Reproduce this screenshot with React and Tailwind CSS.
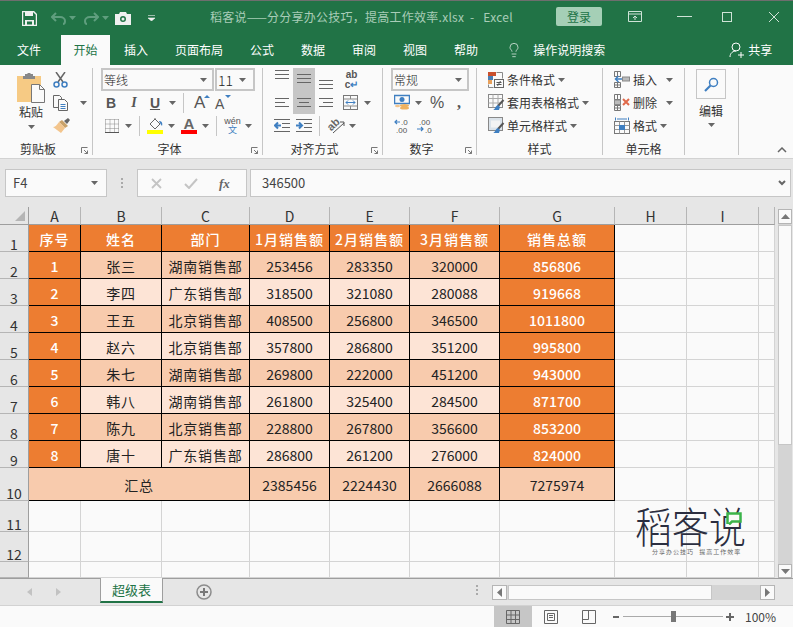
import { Lightbulb } from 'lucide-react';

const data = [
  [1, '张三', '湖南销售部', 253456, 283350, 320000, 856806],
  [2, '李四', '广东销售部', 318500, 321080, 280088, 919668],
  [3, '王五', '北京销售部', 408500, 256800, 346500, 1011800],
  [4, '赵六', '北京销售部', 357800, 286800, 351200, 995800],
  [5, '朱七', '湖南销售部', 269800, 222000, 451200, 943000],
  [6, '韩八', '湖南销售部', 261800, 325400, 284500, 871700],
  [7, '陈九', '北京销售部', 228800, 267800, 356600, 853200],
  [8, '唐十', '广东销售部', 286800, 261200, 276000, 824000],
];

const tabs = ['插入', '页面布局', '公式', '数据', '审阅', '视图', '帮助'];

function Caret({ className = '', fill = '#666' }) {
  return (
    <svg width="7" height="4" viewBox="0 0 7 4" className={`shrink-0 ${className}`}>
      <path d="M0 0h7L3.500 4z" fill={fill} />
    </svg>
  );
}

function Row({ children, className = '' }) {
  return <div className={`flex h-[23px] items-center ${className}`}>{children}</div>;
}

function VSep({ className = '' }) {
  return <div className={`h-[20px] w-px shrink-0 bg-[#c6c6c6] ${className}`} />;
}

function Group({ w, label, launcher, children }) {
  return (
    <div className={`relative mt-[3px] flex h-[87px] shrink-0 flex-col border-r border-[#c6c6c6] ${w}`}>
      <div className="flex-1">{children}</div>
      <div className={`h-[14px] text-center text-[12px] leading-[16px] text-[#333] ${launcher ? 'pr-4' : ''}`}>{label}</div>
      {launcher && (
        <svg width="7" height="7" viewBox="0 0 7 7" className="absolute bottom-px right-[4px]">
          <path d="M.5 6V.5H6.500M3 3l3.500 3.500M6.500 3.500v3h-3" fill="none" stroke="#777" />
        </svg>
      )}
    </div>
  );
}

function Lines({ widths, className = '', color = '#666' }) {
  return (
    <svg width="16" height="9" viewBox="0 0 16 9" className={`shrink-0 ${className}`}>
      {widths.map((l, i) => (
        <path key={i} d={`M${l[0]} ${i * 4 + 0.5}H${l[1]}`} stroke={color} />
      ))}
    </svg>
  );
}

function Combo({ text, w, size = 'text-[12px]', caretClass = '' }) {
  return (
    <div className={`flex h-[23px] items-center border-2 border-[#c6c6c6] bg-[#fafafa] pl-[1px] pr-[5px] ${w}`}>
      <span className={`flex-1 font-light leading-none text-[#222] ${size}`}>{text}</span>
      <Caret className={caretClass} />
    </div>
  );
}

function CondIcon() {
  return (
    <svg width="16" height="16" viewBox="0 0 16 16" className="shrink-0">
      <path d="M0 0h8v4H0z" fill="#c9502e" />
      <path d="M0 4h5v4H0z" fill="#4a7fb5" />
      <path d="M0 8h4v4H0z" fill="#e8a05a" />
      <path d="M8.500.5h6v6M.5 12.500v3h5" fill="none" stroke="#888" />
      <rect x="6.500" y="7.500" width="9" height="8" fill="#fafafa" stroke="#666" />
      <path d="M8.500 10.500h5M8.500 12.500h5M12.500 9l-3 5" stroke="#555" fill="none" />
    </svg>
  );
}

function TableStyleIcon({ plain }) {
  return (
    <svg width="17" height="17" viewBox="0 0 17 17" className="shrink-0">
      <rect x=".5" y=".5" width="14" height="13" fill={plain ? '#dbe3ea' : '#fafafa'} stroke="#888" />
      {!plain && <path d="M.5 4.500h14M.5 9h14M5 .5v13M10 .5v13" stroke="#aaa" fill="none" />}
      {plain && <path d="M3 3.500h9v7H3z" fill="#f3f3f3" />}
      <path d="M15.500 6L10 12" stroke="#555" strokeWidth="2" />
      <path d="M10 11l2 2-1 3H5c2 0 2-4 5-5z" fill="#3f7fc1" />
    </svg>
  );
}

function CellsIcon({ kind }) {
  if (kind === 'format') {
    return (
      <svg width="16" height="17" viewBox="0 0 16 17" className="shrink-0">
        <path d="M1.500 .5v3M14.500 .5v3M3 2h10" stroke="#3f7fc1" fill="none" />
        <rect x=".5" y="4.500" width="15" height="12" fill="#fafafa" stroke="#777" />
        <path d="M.5 8.500h15M.5 12.500h15M5.500 4.500v12M10.500 4.500v12" stroke="#999" fill="none" />
        <rect x="5" y="8" width="6" height="5" fill="#3f7fc1" />
      </svg>
    );
  }
  return (
    <svg width="16" height="17" viewBox="0 0 16 17" className="shrink-0">
      <path d="M.5.5h6v5h-6zM.5 5.500h6M3.500.5v5M.5 11.500h6v5h-6zM3.500 11.500v5M.5 14h6" fill="none" stroke="#777" />
      {kind === 'insert' ? (
        <>
          <rect x="8.500" y="6" width="7" height="4" fill="#bbb" stroke="#888" />
          <path d="M8 8H2M4.500 5L1.500 8l3 3" fill="none" stroke="#3f7fc1" strokeWidth="1.500" />
        </>
      ) : (
        <>
          <rect x=".5" y="6" width="6" height="4.500" fill="#bbb" stroke="#888" />
          <path d="M9 5l6 6M15 5l-6 6" stroke="#e0694a" strokeWidth="2" />
        </>
      )}
    </svg>
  );
}

function Ribbon() {
  return (
    <div className="flex h-[94px] border-b border-[#d2d2d2] bg-[#fafafa]">
      <Group w="w-[93px]" label="剪贴板" launcher>
        <div className="flex">
          <div className="ml-[17px] flex w-[28px] flex-col items-center">
            <svg width="28" height="30" viewBox="0 0 28 30" className="mt-[5px]">
              <path d="M0 3h24v26H0z" fill="#f6ca84" />
              <path d="M8 3V1h2.500V0h3v1H16v2h2v3H6V3z" fill="#888" />
              <path d="M14.500 11.500h8l5 5v13h-13z" fill="#fafafa" stroke="#777" />
              <path d="M22.500 11.500v5h5" fill="none" stroke="#777" />
            </svg>
            <div className="mt-px h-4 text-[12px] leading-4 text-[#333]">粘贴</div>
            <Caret className="mt-[5px]" />
          </div>
          <div className="ml-[8px] flex flex-col">
            <Row>
              <svg width="15" height="16" viewBox="0 0 15 16">
                <path d="M3 0l7 10M12 0L5 10" stroke="#666" strokeWidth="1.500" />
                <circle cx="3.500" cy="12.500" r="2.500" fill="none" stroke="#3f7fc1" strokeWidth="1.500" />
                <circle cx="11.500" cy="12.500" r="2.500" fill="none" stroke="#3f7fc1" strokeWidth="1.500" />
              </svg>
            </Row>
            <Row>
              <svg width="16" height="16" viewBox="0 0 16 16">
                <path d="M.5 .5h6l2 2v10h-8z" fill="#fafafa" stroke="#666" />
                <path d="M5.500 4.500h6l3 3v8h-9z" fill="#fafafa" stroke="#666" />
                <path d="M7.500 9.500h5M7.500 11.500h5M7.500 13.500h5" stroke="#3f7fc1" />
              </svg>
              <Caret className="ml-[11px]" />
            </Row>
            <Row>
              <svg width="17" height="15" viewBox="0 0 17 15">
                <path d="M11 3l4-3 2 2-3 4z" fill="#666" />
                <path d="M9 2l6 6-3 2-6-6z" fill="#c9a26a" />
                <path d="M6 4l6 6-4 5-8-6c2 0 4-2 6-5z" fill="#f3c58d" />
              </svg>
            </Row>
          </div>
        </div>
      </Group>

      <Group w="w-[170px]" label="字体" launcher>
        <Row className="pl-2">
          <Combo text="等线" w="w-[113px]" />
          <Combo text="11" w="ml-px w-[40px]" size="text-[14px]" caretClass="mr-[2px]" />
        </Row>
        <Row className="font-['Liberation_Sans','Noto_Sans_CJK_SC',sans-serif] text-[#555]">
          <span className="ml-[12px] w-[12px] text-center text-[14px] font-bold leading-none">B</span>
          <span className="ml-[13px] w-[8px] text-center font-['Liberation_Serif',serif] text-[14px] font-bold italic leading-none">I</span>
          <span className="ml-[11px] w-[12px] text-center text-[14px] font-bold leading-none underline">U</span>
          <Caret className="ml-[8px]" />
          <VSep className="ml-[7px]" />
          <span className="relative ml-[10px] w-[14px] text-[17px] leading-none">
            A
            <svg width="6" height="3" viewBox="0 0 6 3" className="absolute right-[-2px] top-[1px]"><path d="M0 3h6L3 0z" fill="#3f7fc1" /></svg>
          </span>
          <span className="relative ml-[7px] w-[14px] pt-[2px] text-[14px] leading-none">
            A
            <svg width="6" height="3" viewBox="0 0 6 3" className="absolute right-[-2px] top-0"><path d="M0 0h6L3 3z" fill="#3f7fc1" /></svg>
          </span>
        </Row>
        <Row className="font-['Liberation_Sans','Noto_Sans_CJK_SC',sans-serif]">
          <svg width="14" height="14" viewBox="0 0 14 14" className="ml-[12px] shrink-0">
            <path d="M.5 .5h13M.5 5h13M.5 9.500h13M.5 .5v13M5 .5v13M9.500 .5v13M13.500 .5v13" stroke="#888" strokeDasharray="1 1" fill="none" />
            <path d="M0 13.500h14" stroke="#555" />
          </svg>
          <Caret className="ml-[6px]" />
          <VSep className="ml-[7px]" />
          <div className="ml-[7px] flex w-[16px] shrink-0 flex-col items-center">
            <svg width="16" height="12" viewBox="0 0 16 12">
              <path d="M3 6l5-5 5 5-5 5z" fill="#fafafa" stroke="#666" />
              <path d="M8 1V0" stroke="#666" />
              <path d="M12 3c2 0 4 1 3 5-1-1-2-3-3-5z" fill="#3f7fc1" />
            </svg>
            <div className="h-[4px] w-[16px] bg-[#ffff00]" />
          </div>
          <Caret className="ml-[5px]" />
          <div className="ml-[6px] flex w-[16px] shrink-0 flex-col items-center">
            <span className="h-[12px] text-[15px] font-bold leading-[12px] text-[#666]">A</span>
            <div className="h-[4px] w-[16px] bg-[#ff0000]" />
          </div>
          <Caret className="ml-[5px]" />
          <VSep className="ml-[7px]" />
          <div className="ml-[8px] flex w-[15px] shrink-0 flex-col items-center leading-none">
            <span className="text-[9px] leading-[9px] text-[#555]">wén</span>
            <span className="text-[9px] leading-[9px] text-[#3f7fc1]">文</span>
          </div>
          <Caret className="ml-[5px]" />
        </Row>
      </Group>

      <Group w="w-[120px]" label="对齐方式" launcher>
        <Row>
          <div className="ml-[8px] flex h-[23px] w-[22px] justify-center pt-[2px]">
            <Lines widths={[[1, 15], [1, 15], [1, 15]]} />
          </div>
          <div className="flex h-[23px] w-[22px] justify-center bg-[#c6c6c6] pt-[6px]">
            <Lines widths={[[1, 15], [1, 15], [1, 15]]} />
          </div>
          <div className="flex h-[23px] w-[22px] justify-center pt-[12px]">
            <Lines widths={[[1, 15], [1, 15], [1, 15]]} />
          </div>
          <div className="ml-[8px] flex w-[13px] flex-col items-center font-['Liberation_Sans',sans-serif] text-[#555]">
            <span className="text-[10px] font-bold leading-[10px]">ab</span>
            <span className="text-[10px] font-bold leading-[10px]">c<span className="text-[#3f7fc1]">↵</span></span>
          </div>
        </Row>
        <Row>
          <div className="ml-[8px] flex h-[23px] w-[22px] items-center justify-center">
            <Lines widths={[[1, 15], [1, 11], [1, 15]]} />
          </div>
          <div className="flex h-[23px] w-[22px] items-center justify-center bg-[#c6c6c6]">
            <Lines widths={[[1, 15], [3, 13], [1, 15]]} />
          </div>
          <div className="flex h-[23px] w-[22px] items-center justify-center">
            <Lines widths={[[1, 15], [5, 15], [1, 15]]} />
          </div>
          <svg width="15" height="15" viewBox="0 0 15 15" className="ml-[6px] shrink-0">
            <rect x=".5" y=".5" width="14" height="14" fill="#fafafa" stroke="#777" />
            <path d="M.5 4h14M.5 11h14M7.500 .5V4M7.500 11v3.500" stroke="#888" />
            <path d="M3 7.500h9M5 5.500l-2 2 2 2M10 5.500l2 2-2 2" stroke="#3f7fc1" fill="none" />
          </svg>
          <Caret className="ml-[6px]" />
        </Row>
        <Row>
          <svg width="16" height="13" viewBox="0 0 16 13" className="ml-[11px] shrink-0">
            <path d="M0 .5h16M8 4.500h8M8 8.500h8M0 12.500h16" stroke="#666" />
            <path d="M7 6.500H1M4 3.500l-3 3 3 3" stroke="#3f7fc1" strokeWidth="2" fill="none" />
          </svg>
          <svg width="17" height="13" viewBox="0 0 17 13" className="ml-[5px] shrink-0">
            <path d="M1 .5h16M9 4.500h8M9 8.500h8M1 12.500h16" stroke="#666" />
            <path d="M1 6.500h6M4 3.500l3 3-3 3" stroke="#3f7fc1" strokeWidth="2" fill="none" />
          </svg>
          <VSep className="ml-[7px]" />
          <div className="relative ml-[7px] h-[16px] w-[18px]">
            <span className="absolute left-0 top-[1px] -rotate-45 font-['Liberation_Sans',sans-serif] text-[11px] font-bold leading-none text-[#666]">ab</span>
            <svg width="18" height="16" viewBox="0 0 18 16" className="absolute left-0 top-0">
              <path d="M6 15L17 5M13 4h4v4" stroke="#555" fill="none" />
            </svg>
          </div>
          <Caret className="ml-[4px]" />
        </Row>
      </Group>

      <Group w="w-[94px]" label="数字" launcher>
        <Row><Combo text="常规" w="ml-[8px] w-[78px]" /></Row>
        <Row>
          <svg width="16" height="17" viewBox="0 0 16 17" className="ml-[11px] shrink-0">
            <rect x=".5" y="1.500" width="15" height="8" fill="#fafafa" stroke="#3f7fc1" strokeWidth="1.500" />
            <circle cx="8" cy="5.500" r="2.500" fill="#3f7fc1" />
            <ellipse cx="10.500" cy="11.500" rx="4.500" ry="1.500" fill="#efb25f" />
            <ellipse cx="10.500" cy="14" rx="4.500" ry="1.500" fill="#efb25f" />
            <ellipse cx="3.500" cy="12" rx="2.500" ry="1.200" fill="#f3c58d" />
          </svg>
          <Caret className="ml-[5px]" />
          <span className="ml-[8px] w-[14px] font-['Liberation_Sans',sans-serif] text-[16px] leading-none text-[#555]">%</span>
          <span className="ml-[13px] font-['Liberation_Serif',serif] text-[16px] font-bold leading-none text-[#555]">,</span>
        </Row>
        <Row>
          <svg width="14" height="15" viewBox="0 0 14 15" className="ml-[11px] shrink-0 font-['Liberation_Sans',sans-serif]">
            <path d="M6 4H1M3 2L1 4l2 2" stroke="#3f7fc1" strokeWidth="1.200" fill="none" />
            <text x="7" y="7" fontSize="8" fill="#555">.0</text>
            <text x="2" y="14.500" fontSize="8" fill="#555">.00</text>
          </svg>
          <svg width="16" height="15" viewBox="0 0 16 15" className="ml-[8px] shrink-0 font-['Liberation_Sans',sans-serif]">
            <text x="3" y="7" fontSize="8" fill="#555">.00</text>
            <path d="M1 11h6M5 9l2 2-2 2" stroke="#3f7fc1" strokeWidth="1.200" fill="none" />
            <text x="9" y="14.500" fontSize="8" fill="#555">.0</text>
          </svg>
        </Row>
      </Group>

      <Group w="w-[126px]" label="样式">
        <Row className="text-[12px] text-[#333]">
          <div className="ml-[11px]"><CondIcon /></div>
          <span className="ml-[3px]">条件格式</span>
          <Caret className="ml-[3px]" />
        </Row>
        <Row className="text-[12px] text-[#333]">
          <div className="ml-[11px] w-[16px]"><TableStyleIcon /></div>
          <span className="ml-[3px]">套用表格格式</span>
          <Caret className="ml-[3px]" />
        </Row>
        <Row className="text-[12px] text-[#333]">
          <div className="ml-[11px] w-[16px]"><TableStyleIcon plain /></div>
          <span className="ml-[3px]">单元格样式</span>
          <Caret className="ml-[3px]" />
        </Row>
      </Group>

      <Group w="w-[82px]" label="单元格">
        <Row className="text-[12px] text-[#333]">
          <div className="ml-[11px]"><CellsIcon kind="insert" /></div>
          <span className="ml-[3px]">插入</span>
          <Caret className="ml-[9px]" />
        </Row>
        <Row className="text-[12px] text-[#333]">
          <div className="ml-[11px]"><CellsIcon kind="delete" /></div>
          <span className="ml-[3px]">删除</span>
          <Caret className="ml-[9px]" />
        </Row>
        <Row className="text-[12px] text-[#333]">
          <div className="ml-[11px]"><CellsIcon kind="format" /></div>
          <span className="ml-[3px]">格式</span>
          <Caret className="ml-[3px]" />
        </Row>
      </Group>

      <Group w="w-[54px]" label="">
        <div className="ml-[11px] flex w-[30px] flex-col items-center">
          <div className="mt-px flex h-[30px] w-[30px] items-center justify-center border border-[#c6c6c6]">
            <svg width="15" height="15" viewBox="0 0 15 15">
              <circle cx="9.500" cy="5.500" r="4" fill="none" stroke="#3f7fc1" strokeWidth="1.500" />
              <path d="M6.500 8.500L1 14" stroke="#3f7fc1" strokeWidth="2.200" />
            </svg>
          </div>
          <div className="mt-[4px] h-4 whitespace-nowrap text-[12px] leading-4 text-[#333]">编辑</div>
          <Caret className="mt-[4px]" />
        </div>
      </Group>

      <div className="flex flex-1 items-end justify-end pb-[5px] pr-[6px]">
        <svg width="10" height="6" viewBox="0 0 10 6">
          <path d="M1 5l4-4 4 4" fill="none" stroke="#666" strokeWidth="1.500" />
        </svg>
      </div>
    </div>
  );
}

function FormulaBar() {
  return (
    <div className="mt-[10px] flex h-[28px] items-stretch pl-[5px] pr-[2px] text-[13px]">
      <div className="flex w-[102px] items-center border border-[#c6c6c6] bg-[#fafafa] pl-[7px] pr-[8px] text-[#444]">
        <span className="flex-1">F4</span>
        <Caret />
      </div>
      <div className="flex w-[30px] flex-col items-center justify-center gap-[2px]">
        <div className="h-[2px] w-[2px] bg-[#aaa]" />
        <div className="h-[2px] w-[2px] bg-[#aaa]" />
        <div className="h-[2px] w-[2px] bg-[#aaa]" />
      </div>
      <div className="flex w-[110px] items-center border border-[#c6c6c6] bg-[#fafafa]">
        <svg width="11" height="11" viewBox="0 0 11 11" className="ml-[13px]">
          <path d="M1 1l9 9M10 1l-9 9" stroke="#c4c4c4" strokeWidth="1.800" />
        </svg>
        <svg width="14" height="11" viewBox="0 0 14 11" className="ml-[22px]">
          <path d="M1 6l4 4 8-9" stroke="#c4c4c4" strokeWidth="2" fill="none" />
        </svg>
        <span className="ml-[21px] font-['Liberation_Serif',serif] text-[13px] font-bold italic leading-none text-[#666]">fx</span>
      </div>
      <div className="ml-[3px] flex flex-1 items-center border border-[#c6c6c6] bg-[#fafafa] pl-[11px] pr-[4px] text-[#444]">
        <span className="flex-1">346500</span>
        <svg width="8" height="6" viewBox="0 0 8 6">
          <path d="M1 1l3 3 3-3" fill="none" stroke="#666" strokeWidth="2" />
        </svg>
      </div>
    </div>
  );
}

function Cell({ children, className = '' }) {
  return (
    <div className={`flex items-center justify-center overflow-hidden whitespace-nowrap border-b border-r pt-[2px] text-[14px] leading-none ${className}`}>
      {children}
    </div>
  );
}

function RowHead({ n, clip }) {
  return (
    <div className={`flex justify-center border-b border-r border-b-[#b5b5b5] border-r-[#9e9e9e] bg-[#e6e6e6] text-[14px] leading-none text-[#333] ${clip ? 'items-start overflow-hidden pt-[13px]' : 'items-end'}`}>
      {n}
    </div>
  );
}

function Blank() {
  return <div className="border-b border-r border-[#d4d4d4] bg-[#fafafa]" />;
}

function Sheet() {
  const colHeads = ['A', 'B', 'C', 'D', 'E', 'F', 'G', 'H', 'I', ''];
  return (
    <div className="relative mt-[10px] flex h-[371px] overflow-hidden">
      <div className="grid h-[371px] w-[775px] shrink-0 grid-cols-[29px_52px_81px_88px_80px_80px_90px_115px_72px_72px_16px] grid-rows-[18px_repeat(9,27px)_33px_31px_30px_16px]">
        <div className="flex items-end justify-end border-b border-r border-[#9e9e9e] bg-[#e6e6e6] pb-[3px] pr-[3px]">
          <svg width="10" height="10" viewBox="0 0 10 10"><path d="M10 0v10H0z" fill="#b5b5b5" /></svg>
        </div>
        {colHeads.map((c, i) => (
          <div key={i} className="flex items-end justify-center border-b border-r border-b-[#9e9e9e] border-r-[#b5b5b5] bg-[#e6e6e6] text-[14px] leading-[15px] text-[#333]">{c}</div>
        ))}

        <RowHead n={1} />
        {['序号', '姓名', '部门', '1月销售额', '2月销售额', '3月销售额', '销售总额'].map((h) => (
          <Cell key={h} className="border-black bg-[#ed7d31] font-medium tracking-[1px] text-white">{h}</Cell>
        ))}
        <Blank /><Blank /><Blank />

        {data.map((r, i) => {
          const bg = i % 2 === 0 ? 'bg-[#f8cbad]' : 'bg-[#fde4d6]';
          return [
            <RowHead key={`h${i}`} n={i + 2} />,
            ...r.map((v, j) => (
              <Cell
                key={`${i}-${j}`}
                className={`border-black ${j === 1 || j === 2 ? 'tracking-[0.8px]' : ''} ${j === 0 || j === 6 ? 'bg-[#ed7d31] font-medium text-white' : `${bg} text-[#222]`}`}
              >
                {v}
              </Cell>
            )),
            <Blank key={`a${i}`} />,
            <Blank key={`b${i}`} />,
            <Blank key={`c${i}`} />,
          ];
        })}

        <RowHead n={10} />
        <Cell className="col-span-3 border-black bg-[#f8cbad] tracking-[0.8px] text-[#222]">汇总</Cell>
        {[2385456, 2224430, 2666088, 7275974].map((v) => (
          <Cell key={v} className="border-black bg-[#f8cbad] text-[#222]">{v}</Cell>
        ))}
        <Blank /><Blank /><Blank />

        {[11, 12, 13].map((n) => [
          <RowHead key={n} n={n} clip={n === 13} />,
          ...Array.from({ length: 10 }, (_, j) => <Blank key={`${n}-${j}`} />),
        ])}
      </div>

      <div className="ml-[3px] mt-[2px] flex w-[14px] flex-col bg-[#d4d4d4]">
        <div className="flex h-[15px] items-center justify-center border border-[#b5b5b5] bg-[#fafafa]">
          <svg width="9" height="5" viewBox="0 0 9 5"><path d="M0 5h9L4.500 0z" fill="#777" /></svg>
        </div>
        <div className="mt-px h-[220px] border border-[#c6c6c6] bg-[#fafafa]" />
        <div className="mt-auto flex h-[14px] items-center justify-center border border-[#b5b5b5] bg-[#fafafa]">
          <svg width="9" height="5" viewBox="0 0 9 5"><path d="M0 0h9L4.500 5z" fill="#777" /></svg>
        </div>
      </div>

      <div className="absolute left-[635px] top-[296px] w-[112px] text-[#2b2e40]">
        <div className="origin-top scale-y-[1.15] whitespace-nowrap text-[37px] font-light leading-[38px]">稻客说</div>
        <div className="absolute left-[17px] top-[46px] whitespace-nowrap text-[6px] leading-none tracking-[1px] text-[#666] [word-spacing:3px]">分享办公技巧 提高工作效率</div>
        <svg width="16" height="13" viewBox="0 0 16 13" className="absolute left-[91px] top-[9px]">
          <path d="M1.500 12V1.500h13v8H6l-3 3" fill="#fafafa" stroke="#3cb44a" strokeWidth="2.500" />
        </svg>
      </div>
    </div>
  );
}

function SheetTabs() {
  return (
    <div className="flex h-[28px] items-start border-y border-b-[#d2d2d2] border-t-[#9e9e9e] bg-[#e6e6e6]">
      <svg width="5" height="8" viewBox="0 0 5 8" className="ml-[27px] mt-[9px]"><path d="M5 0v8L0 4z" fill="#c2c2c2" /></svg>
      <svg width="5" height="8" viewBox="0 0 5 8" className="ml-[24px] mt-[9px]"><path d="M0 0v8l5-4z" fill="#c2c2c2" /></svg>
      <div className="relative -top-px ml-[39px] flex h-[25px] w-[63px] items-center justify-center border-x border-b-2 border-x-[#9e9e9e] border-b-[#217346] bg-[#fafafa] text-[13px] leading-none text-[#217346]">
        超级表
      </div>
      <svg width="16" height="16" viewBox="0 0 16 16" className="ml-[33px] mt-[5px]">
        <circle cx="8" cy="8" r="7" fill="none" stroke="#8c8c8c" strokeWidth="1.500" />
        <path d="M8 4v8M4 8h8" stroke="#777" strokeWidth="2" />
      </svg>
      <div className="ml-[264px] mt-[6px] flex flex-col gap-[2px]">
        <div className="h-[2px] w-[2px] bg-[#aaa]" />
        <div className="h-[2px] w-[2px] bg-[#aaa]" />
        <div className="h-[2px] w-[2px] bg-[#aaa]" />
      </div>
      <div className="ml-[14px] mt-[6px] flex h-[15px] w-[283px] bg-[#d4d4d4]">
        <div className="flex w-[15px] items-center justify-center border border-[#b5b5b5] bg-[#fafafa]">
          <svg width="5" height="9" viewBox="0 0 5 9"><path d="M5 0v9L0 4.500z" fill="#777" /></svg>
        </div>
        <div className="ml-px w-[204px] border border-[#c6c6c6] bg-[#fafafa]" />
        <div className="ml-auto flex w-[15px] items-center justify-center border border-[#b5b5b5] bg-[#fafafa]">
          <svg width="5" height="9" viewBox="0 0 5 9"><path d="M0 0v9l5-4.500z" fill="#777" /></svg>
        </div>
      </div>
    </div>
  );
}

function StatusBar() {
  return (
    <div className="flex h-[21px] items-center bg-[#fafafa]">
      <div className="ml-[494px] flex h-[21px] w-[38px] items-center justify-center bg-[#c6c6c6]">
        <svg width="14" height="14" viewBox="0 0 14 14">
          <path d="M.5 .5h13v13H.5zM.5 5h13M.5 9.500h13M5 .5v13M9.500 .5v13" fill="none" stroke="#666" />
        </svg>
      </div>
      <svg width="14" height="14" viewBox="0 0 14 14" className="ml-[12px]">
        <path d="M.5 .5h13v13H.5z" fill="none" stroke="#666" />
        <path d="M3.500 3.500h7v7h-7zM5 5.500h4M5 7.500h4" fill="none" stroke="#666" />
      </svg>
      <svg width="14" height="14" viewBox="0 0 14 14" className="ml-[24px]">
        <path d="M.5 13.500V.5h13v13M.5 9.500h6V.5M.5 13.500h13" fill="none" stroke="#666" />
      </svg>
      <div className="ml-[17px] h-[2px] w-[6px] bg-[#666]" />
      <div className="relative ml-[4px] flex h-[11px] w-[100px] items-center">
        <div className="h-px w-full bg-[#aaa]" />
        <div className="absolute left-[48px] h-[11px] w-[5px] bg-[#777]" />
      </div>
      <svg width="8" height="8" viewBox="0 0 8 8" className="ml-[3px]"><path d="M4 0v8M0 4h8" stroke="#666" strokeWidth="2" /></svg>
      <span className="ml-[11px] text-[12px] leading-none text-[#444]">100%</span>
    </div>
  );
}

export default function App() {
  return (
    <div className="h-[627px] w-[793px] overflow-hidden bg-[#e6e6e6] font-['Noto_Sans_CJK_SC','Liberation_Sans',sans-serif]">
      <div className="flex h-[35px] items-center border-t border-[#6e6e6e] bg-[#217346] pl-[22px] pr-[13px] text-[12px] text-[#a9cdb8]">
        <svg width="15" height="15" viewBox="0 0 15 15" className="shrink-0">
          <path d="M.5.5h11l3 3v11H.5z" fill="none" stroke="#f0f0f0" strokeWidth="1.500" />
          <path d="M3 1h8v4H3zM3 9h9v5H3z" fill="#f0f0f0" />
          <path d="M5 10.500h5v3H5z" fill="#217346" />
        </svg>
        <svg width="15" height="13" viewBox="0 0 15 13" className="ml-[14px] shrink-0">
          <path d="M5 1L1 5l4 4M1 5h8c3 0 5 2 5 4s-1 3-2 3" fill="none" stroke="#5f9e7e" strokeWidth="2" />
        </svg>
        <Caret className="ml-[3px]" fill="#5f9e7e" />
        <svg width="15" height="13" viewBox="0 0 15 13" className="ml-[8px] shrink-0">
          <path d="M10 1l4 4-4 4M14 5H6C3 5 1 7 1 9s1 3 2 3" fill="none" stroke="#5f9e7e" strokeWidth="2" />
        </svg>
        <Caret className="ml-[3px]" fill="#5f9e7e" />
        <svg width="16" height="13" viewBox="0 0 16 13" className="ml-[6px] shrink-0">
          <path d="M0 2h4l1-2h6l1 2h4v11H0z" fill="#f0f0f0" />
          <circle cx="8" cy="7" r="3" fill="#217346" />
          <circle cx="8" cy="7" r="1.500" fill="#f0f0f0" />
        </svg>
        <svg width="7" height="6" viewBox="0 0 7 6" className="ml-[17px] shrink-0">
          <path d="M0 .5h7M0 3h7L3.500 6z" fill="#f0f0f0" stroke="#f0f0f0" strokeWidth=".6" />
        </svg>
        <span className="-mt-[3px] ml-[55px] whitespace-nowrap tracking-[0.25px]">稻客说——分分享办公技巧，提高工作效率.xlsx&nbsp;&nbsp;-&nbsp;&nbsp;&nbsp;Excel</span>
        <div className="-mt-[3px] ml-auto flex h-[19px] w-[46px] items-center justify-center rounded-[2px] bg-[#a5cfb6] text-[#217346]">登录</div>
        <svg width="14" height="11" viewBox="0 0 14 11" className="-mt-[3px] ml-[26px] shrink-0">
          <path d="M.5.5h13v10H.5zM.5 3h13M7 9V5M5 7l2-2 2 2" fill="none" stroke="#cfe3d7" />
        </svg>
        <div className="-mt-[3px] ml-[35px] h-px w-[15px] bg-[#cfe3d7]" />
        <div className="-mt-[3px] ml-[30px] h-[10px] w-[10px] border border-[#cfe3d7]" />
        <svg width="12" height="12" viewBox="0 0 12 12" className="-mt-[3px] ml-[36px] shrink-0">
          <path d="M1 1l10 10M11 1L1 11" stroke="#cfe3d7" />
        </svg>
      </div>

      <div className="flex h-[30px] items-stretch bg-[#217346] pb-px text-[12px] text-white">
        <div className="ml-[17px] flex items-center">文件</div>
        <div className="relative ml-[20px] -mb-px flex w-[49px] items-center justify-center bg-[#fafafa] pb-px text-[#217346]">开始</div>
        <div className="ml-[14px] flex">
          {tabs.map((t, i) => (
            <div key={t} className={`flex items-center ${i ? 'ml-[27px]' : ''}`}>{t}</div>
          ))}
        </div>
        <Lightbulb size={16} strokeWidth={1} className="ml-[28px] self-center text-white" />
        <div className="ml-[11px] flex items-center">操作说明搜索</div>
        <svg width="16" height="16" viewBox="0 0 16 16" className="ml-[124px] self-center">
          <circle cx="7" cy="5" r="4" fill="none" stroke="#fff" />
          <path d="M1 15c0-4 3-6 6-6M9 13h6M12 10v6" fill="none" stroke="#fff" />
        </svg>
        <div className="ml-[3px] flex items-center">共享</div>
      </div>

      <Ribbon />
      <FormulaBar />
      <Sheet />
      <SheetTabs />
      <StatusBar />
    </div>
  );
}
